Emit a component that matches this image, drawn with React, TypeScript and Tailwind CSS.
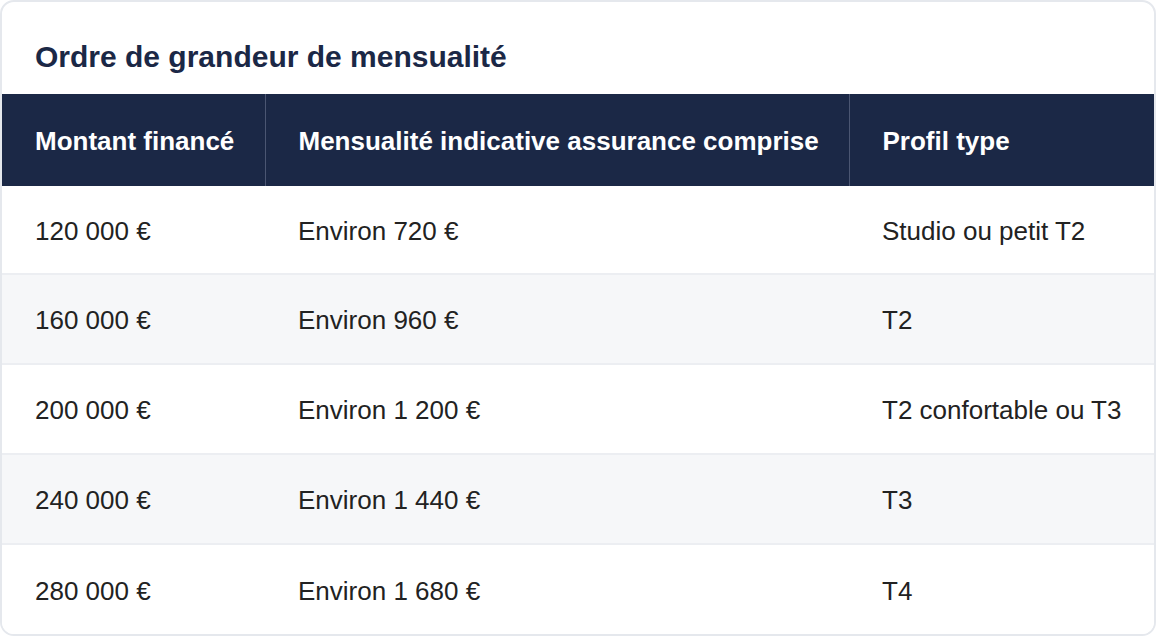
const rows = [
  { amount: "120 000 €", monthly: "Environ 720 €", profile: "Studio ou petit T2" },
  { amount: "160 000 €", monthly: "Environ 960 €", profile: "T2" },
  { amount: "200 000 €", monthly: "Environ 1 200 €", profile: "T2 confortable ou T3" },
  { amount: "240 000 €", monthly: "Environ 1 440 €", profile: "T3" },
  { amount: "280 000 €", monthly: "Environ 1 680 €", profile: "T4" },
];

export default function App() {
  return (
    <div className="w-[1156px] h-[638px] bg-white font-['Liberation_Sans',Arial,sans-serif]">
      <div className="w-[1156px] h-[636px] border-2 border-[#e5e8ed] rounded-[14px] overflow-hidden bg-white">
        <div className="h-[92px] px-[33px] pt-[37px]">
          <h2 className="text-[30px] leading-[36px] font-bold text-[#1b2846]">Ordre de grandeur de mensualité</h2>
        </div>

        <table className="w-full border-collapse table-fixed">
          <colgroup>
            <col className="w-[263px]" />
            <col className="w-[584px]" />
            <col />
          </colgroup>
          <thead>
            <tr className="bg-[#1b2846] h-[92px]">
              <th className="px-[33px] pt-[3px] text-left text-[26px] font-bold text-white border-r border-[#4b5672] whitespace-nowrap">
                Montant financé
              </th>
              <th className="px-[33px] pt-[3px] text-left text-[26px] font-bold text-white border-r border-[#4b5672] whitespace-nowrap">
                Mensualité indicative assurance comprise
              </th>
              <th className="px-[33px] pt-[3px] text-left text-[26px] font-bold text-white whitespace-nowrap">Profil type</th>
            </tr>
          </thead>
          <tbody>
            {rows.map((r, i) => (
              <tr
                key={r.amount}
                className={`${i === 0 ? "h-[88px]" : "h-[90px]"} ${i % 2 === 1 ? "bg-[#f6f7f9]" : "bg-white"} ${i < rows.length - 1 ? "border-b-2 border-[#eceef2]" : ""}`}
              >
                <td className="px-[33px] pt-[3px] text-[26px] text-[#222222] whitespace-nowrap">{r.amount}</td>
                <td className="px-[33px] pt-[3px] text-[26px] text-[#222222] whitespace-nowrap">{r.monthly}</td>
                <td className="px-[33px] pt-[3px] text-[26px] text-[#222222] whitespace-nowrap">{r.profile}</td>
              </tr>
            ))}
          </tbody>
        </table>
      </div>
    </div>
  );
}
